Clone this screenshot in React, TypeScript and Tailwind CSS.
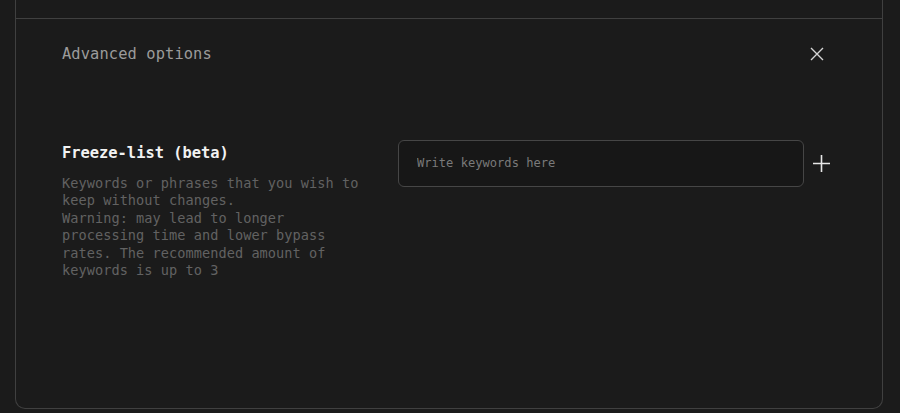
import React from 'react';

const mono = { fontFamily: '"DejaVu Sans Mono", "Liberation Mono", monospace' };

const App: React.FC = () => {
  return (
    <div className="h-[413px] w-[900px] overflow-hidden bg-[#1b1b1b] pl-[15px] pr-[17px]" style={mono}>
      <div className="h-[409px] rounded-b-[10px] border-x border-b border-[#404040]">
        <div className="h-[18px]"></div>
        <div className="border-t border-[#404040] pl-[46px] pr-[57px] pt-[24px]">
          <div className="flex items-center justify-between">
            <h3 className="text-[15.4px] leading-[22px] tracking-[0.1px] text-[#9b9b9b]">Advanced options</h3>
            <button className="text-[#d4d4d4]">
              <svg width="16" height="16" viewBox="0 0 16 16" fill="none" stroke="currentColor" strokeWidth="1.4">
                <path d="M2 2l12 12M14 2L2 14" />
              </svg>
            </button>
          </div>

          <div className="mt-[75px] flex items-start">
            <div className="w-[336px] shrink-0 pt-[2px]">
              <div className="text-[15.4px] font-bold leading-[22px] text-[#f2f2f2]">Freeze-list (beta)</div>
              <p className="mt-[11px] w-[310px] text-[13.6px] leading-[17.4px] tracking-[0.05px] text-[#626262]">
                Keywords or phrases that you wish to keep without changes.
                <br />
                Warning: may lead to longer processing time and lower bypass rates. The recommended amount of keywords is up to 3
              </p>
            </div>
            <div className="flex h-[47px] w-[406px] shrink-0 items-center rounded-[6px] border border-[#464646] bg-[#171717] px-[18px]">
              <input
                className="w-full bg-transparent text-[12.1px] text-[#cfcfcf] outline-none placeholder:text-[#7a7a7a]"
                placeholder="Write keywords here"
                style={mono}
              />
            </div>
            <button className="ml-[8px] mt-[14px] shrink-0 text-[#e6e6e6]">
              <svg width="19" height="19" viewBox="0 0 19 19" fill="none" stroke="currentColor" strokeWidth="1.6">
                <path d="M9.5 1v17M1 9.5h17" />
              </svg>
            </button>
          </div>
        </div>
      </div>
    </div>
  );
};

export default App;
